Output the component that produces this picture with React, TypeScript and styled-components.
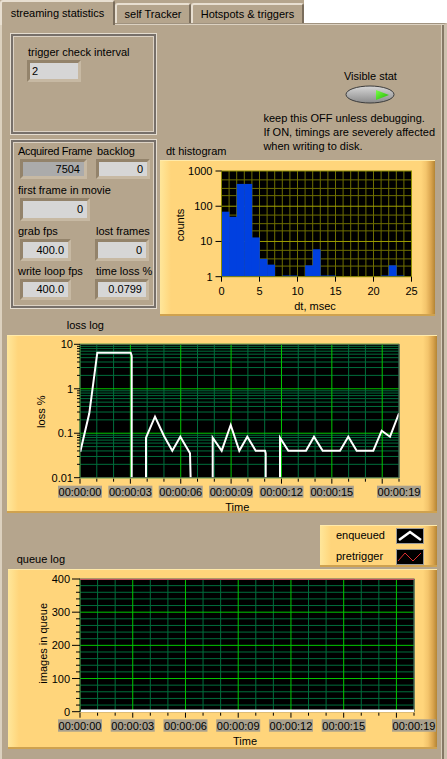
import React from 'react';
import styled, { createGlobalStyle } from 'styled-components';

const TAN = '#B5A58D';
const MAJOR = '#00C800';
const MINOR = '#006E3C';
const LABEL_BG = '#A9A08D';

const Global = createGlobalStyle`
  html, body { margin: 0; padding: 0; background: #fff; }
  body { font-family: "Liberation Sans", Arial, sans-serif; font-size: 11px; color: #000; }
  * { box-sizing: border-box; }
`;

const Screen = styled.div`
  width: 447px;
  height: 759px;
  overflow: hidden;
  display: flex;
  flex-direction: column;
  background: #fff;
`;

const TabStrip = styled.div`
  display: flex;
  align-items: flex-end;
  height: 23px;
  width: 304px;
  background: ${TAN};
  position: relative;
  z-index: 2;
  flex-shrink: 0;
`;

const Tab = styled.div<{ $active?: boolean; $w: number }>`
  width: ${p => p.$w}px;
  height: ${p => (p.$active ? 25 : 20)}px;
  margin-bottom: ${p => (p.$active ? -2 : 0)}px;
  padding-bottom: ${p => (p.$active ? 2 : 0)}px;
  background: ${TAN};
  border-left: 2px solid #E8DFD1;
  border-top: 2px solid #E8DFD1;
  border-right: 2px solid #7A6D5C;
  border-top-left-radius: 3px;
  border-top-right-radius: 3px;
  display: flex;
  align-items: center;
  justify-content: center;
  white-space: nowrap;
`;

const Panel = styled.div`
  flex: 1;
  background: ${TAN};
  border-top: 1px solid #A09380;
  border-left: 2px solid #DCD1BF;
  border-right: 3px solid #CDC1AE;
  box-shadow: inset 0 1px 0 #DCD2C2, inset -2px 0 0 #857865, inset -3px 0 0 #D8CDBB;
  display: flex;
  flex-direction: column;
  padding-top: 9px;
`;

const TopSection = styled.div`
  display: flex;
  gap: 3px;
  margin-left: 8px;
  height: 283px;
`;

const LeftCol = styled.div`
  width: 147px;
  display: flex;
  flex-direction: column;
  gap: 4px;
`;

const Cluster = styled.div<{ $h: number; $pt: number; $pl: number }>`
  height: ${p => p.$h}px;
  padding: ${p => p.$pt}px 0 0 ${p => p.$pl}px;
  border: 1px solid #E4DCCF;
  box-shadow: inset 0 0 0 2px #77706A, inset 0 0 0 3px #DCD2C4;
  display: flex;
  flex-direction: column;
  align-items: flex-start;
  gap: 1px;
`;

const FieldGrid = styled.div`
  display: grid;
  grid-template-columns: 78px 1fr;
  row-gap: 4px;
  align-items: start;
`;

const Field = styled.div<{ $span?: boolean; $mt?: number }>`
  display: flex;
  flex-direction: column;
  align-items: flex-start;
  gap: 1px;
  margin-top: ${p => p.$mt ?? 0}px;
  ${p => (p.$span ? 'grid-column: 1 / span 2;' : '')}
`;

const FieldLabel = styled.div<{ $tight?: boolean; $ml?: number }>`
  line-height: 13px;
  white-space: nowrap;
  margin-left: ${p => p.$ml ?? 0}px;
  letter-spacing: ${p => (p.$tight ? '-0.3px' : 'normal')};
`;

const NumBox = styled.div<{ $w: number; $h: number; $dark?: boolean; $left?: boolean; $ml?: number }>`
  width: ${p => p.$w}px;
  height: ${p => p.$h}px;
  margin-left: ${p => p.$ml ?? 0}px;
  border: 3px solid;
  border-color: #93836B #C7B9A3 #C7B9A3 #93836B;
  background: ${p => (p.$dark ? '#ABABAB' : '#D6D6D6')};
  display: flex;
  align-items: center;
  justify-content: ${p => (p.$left ? 'flex-start' : 'flex-end')};
  padding: 0 ${p => (p.$left ? 0 : 4)}px 0 ${p => (p.$left ? 2 : 0)}px;
  line-height: 13px;
`;

const RightCol = styled.div`
  width: 275px;
  display: flex;
  flex-direction: column;
`;

const HeadRow = styled.div`
  flex: 1;
  display: flex;
  align-items: flex-end;
`;

const Title = styled.div<{ $ml: number; $mb?: number; $mt?: number }>`
  margin-left: ${p => p.$ml}px;
  margin-bottom: ${p => p.$mb ?? 0}px;
  margin-top: ${p => p.$mt ?? 0}px;
  line-height: 13px;
  white-space: nowrap;
`;

const StatBlock = styled.div`
  margin-left: auto;
  margin-bottom: 7px;
  display: flex;
  flex-direction: column;
`;

const ToggleGroup = styled.div`
  margin-left: 81px;
  width: 52px;
  display: flex;
  flex-direction: column;
  align-items: center;
  gap: 2px;
  margin-bottom: 7px;
`;

const ToggleLabel = styled.div`
  line-height: 13px;
  white-space: nowrap;
`;

const ToggleButton = styled.div`
  width: 50px;
  height: 19px;
  svg { display: block; }
`;

const Notes = styled.div`
  line-height: 14px;
  white-space: nowrap;
`;

const Frame = styled.div<{ $w: number; $h: number; $ml?: number; $mt?: number }>`
  width: ${p => p.$w}px;
  height: ${p => p.$h}px;
  margin-left: ${p => p.$ml ?? 0}px;
  margin-top: ${p => p.$mt ?? 0}px;
  flex-shrink: 0;
  background: linear-gradient(
    to right,
    #FFE69A 0px,
    #FFDF8C 5px,
    #FFD57B 11px,
    #FFD57B calc(100% - 14px),
    #F4C56C calc(100% - 9px),
    #D9A44E calc(100% - 4px),
    #B48534 100%
  );
  box-shadow: inset 0 1px 0 #FFEAAA, inset 0 -2px 0 #CFA24F;
  svg { display: block; }
`;

const LegendRow = styled.div`
  display: flex;
  justify-content: space-between;
  align-items: flex-end;
  margin-top: 12px;
  margin-right: 7px;
`;

const LegendBox = styled(Frame)`
  display: flex;
  flex-direction: column;
  justify-content: center;
  gap: 5px;
  padding-left: 16px;
`;

const LegendItem = styled.div`
  display: flex;
  align-items: center;
  height: 16px;
`;

const LegendText = styled.div`
  width: 60px;
  line-height: 13px;
  white-space: nowrap;
`;

const Swatch = styled.div`
  width: 28px;
  height: 16px;
  background: #000;
  border: 1px solid #9A9A9A;
  svg { display: block; }
`;

/* ---------- charts ---------- */

const FONT = 11;

function TimeLabels({ xs, y, h }: { xs: { t: number; x: number }[]; y: number; h: number }) {
  return (
    <g>
      {xs.map(({ t, x }) => {
        const s = `00:00:${String(t).padStart(2, '0')}`;
        return (
          <g key={t}>
            <rect x={x - 22} y={y} width={44} height={h} fill={LABEL_BG} />
            <text x={x} y={y + h / 2 + 4} fontSize={FONT} textAnchor="middle">{s}</text>
          </g>
        );
      })}
    </g>
  );
}

function Histogram() {
  const W = 275, H = 156;
  const x0 = 61.5, x1 = 251.5, y0 = 11, y1 = 116.7;
  const X = (v: number) => x0 + ((x1 - x0) * v) / 25;
  const Y = (v: number) => y1 - ((y1 - y0) * Math.log10(v)) / 3;
  const counts = [70, 50, 430, 430, 13, 3.2, 2.2, 0, 1.08, 1.08, 0, 2.1, 6, 1.08, 1.08, 0, 0, 0, 0, 0, 0, 1.08, 2.1, 1.08, 0];
  const minorVals: number[] = [];
  [1, 10, 100].forEach(d => [2, 3.2, 5.6].forEach(m => minorVals.push(m * d)));
  const OLIVE = '#6E6E00';
  const OLIVE_B = '#A0A000';
  return (
    <svg width={W} height={H}>
      <rect x={x0} y={y0} width={x1 - x0} height={y1 - y0} fill="#000" />
      {Array.from({ length: 26 }, (_, i) => (
        <line key={'v' + i} x1={X(i)} x2={X(i)} y1={y0} y2={y1} stroke={OLIVE} strokeWidth={1} />
      ))}
      {minorVals.map(v => (
        <line key={'m' + v} x1={x0} x2={x1} y1={Y(v)} y2={Y(v)} stroke={OLIVE} strokeWidth={1} />
      ))}
      {[10, 100].map(v => (
        <line key={'M' + v} x1={x0} x2={x1} y1={Y(v)} y2={Y(v)} stroke={OLIVE_B} strokeWidth={1} />
      ))}
      {counts.map((c, i) =>
        c > 0 ? (
          <rect key={'b' + i} x={X(i)} y={Y(c)} width={X(i + 1) - X(i) + 0.3} height={y1 - Y(c)} fill="#0040E0" />
        ) : null
      )}
      <rect x={x0} y={y0} width={x1 - x0} height={y1 - y0} fill="none" stroke="#8A8A00" strokeWidth={1} />
      {[1, 10, 100, 1000].map(v => (
        <g key={'yt' + v}>
          <line x1={x0 - 6} x2={x0} y1={Y(v)} y2={Y(v)} stroke="#000" />
          <text x={x0 - 9} y={Y(v) + 4} fontSize={FONT} textAnchor="end">{v}</text>
        </g>
      ))}
      {[0, 5, 10, 15, 20, 25].map(v => (
        <g key={'xt' + v}>
          <line x1={X(v)} x2={X(v)} y1={y1} y2={y1 + 5} stroke="#000" />
          <text x={X(v)} y={131 + 4} fontSize={FONT} textAnchor="middle">{v}</text>
        </g>
      ))}
      <text transform={`rotate(-90 20 65)`} x={20} y={69} fontSize={FONT} textAnchor="middle">counts</text>
      <text x={155} y={150} fontSize={FONT} textAnchor="middle">dt, msec</text>
    </svg>
  );
}

const lossPts3x: [number, number][] = [
  [241, 425], [268, 310], [292, 128], [392, 128], [395, 138], [395, 512],
  [438, 512], [438, 383], [465, 320], [492, 378], [517, 422], [541, 380], [570, 430], [572, 512],
  [638, 512], [638, 383], [665, 422], [692, 345], [718, 422], [742, 380], [767, 422], [795, 422], [797, 430], [797, 512],
  [840, 512], [840, 383], [865, 422], [918, 422], [942, 380], [968, 422], [1020, 422], [1045, 380], [1070, 422],
  [1120, 422], [1145, 362], [1170, 380], [1197, 310],
];

function LossLog() {
  const W = 430, H = 178;
  const x0 = 73, x1 = 392, y0 = 9.3, y1 = 142.7;
  const T = (t: number) => x0 + ((x1 - x0) * t) / 19;
  const L = (v: number) => y1 - ((y1 - y0) * (Math.log10(v) + 2)) / 3;
  const minors: number[] = [];
  [0.01, 0.1, 1].forEach(d => [2, 3, 4, 5, 6, 7, 8, 9].forEach(m => minors.push(m * d)));
  const pts = lossPts3x.map(([x, y]) => `${(x / 3 - 7).toFixed(1)},${(y / 3 - 25).toFixed(1)}`).join(' ');
  return (
    <svg width={W} height={H}>
      <defs>
        <clipPath id="lossclip">
          <rect x={x0} y={y0} width={x1 - x0} height={y1 - y0} />
        </clipPath>
      </defs>
      <rect x={x0} y={y0} width={x1 - x0} height={y1 - y0} fill="#000" />
      {minors.map(v => (
        <line key={'hm' + v} x1={x0} x2={x1} y1={L(v)} y2={L(v)} stroke={MINOR} />
      ))}
      {Array.from({ length: 20 }, (_, t) => (
        <line key={'vm' + t} x1={T(t)} x2={T(t)} y1={y0} y2={y1} stroke={t % 3 === 0 ? MAJOR : MINOR} />
      ))}
      {[0.01, 0.1, 1, 10].map(v => (
        <line key={'hM' + v} x1={x0} x2={x1} y1={L(v)} y2={L(v)} stroke={MAJOR} />
      ))}
      <polyline points={pts} fill="none" stroke="#fff" strokeWidth={2} clipPath="url(#lossclip)" strokeLinejoin="miter" />
      <rect x={x0} y={y0} width={x1 - x0} height={y1 - y0} fill="none" stroke="#5A5A5A" />
      {minors.map(v => (
        <line key={'tm' + v} x1={x0 - 3} x2={x0} y1={L(v)} y2={L(v)} stroke="#000" />
      ))}
      {[0.01, 0.1, 1, 10].map(v => (
        <g key={'ty' + v}>
          <line x1={x0 - 6} x2={x0} y1={L(v)} y2={L(v)} stroke="#000" />
          <text x={x0 - 7} y={L(v) + 4} fontSize={FONT} textAnchor="end">{String(v)}</text>
        </g>
      ))}
      {Array.from({ length: 20 }, (_, t) => (
        <line key={'tx' + t} x1={T(t)} x2={T(t)} y1={y1 + 1} y2={y1 + (t % 3 === 0 ? 6 : 4)} stroke="#000" />
      ))}
      <TimeLabels xs={[0, 3, 6, 9, 12, 15, 19].map(t => ({ t, x: T(t) }))} y={150.7} h={12} />
      <text transform={`rotate(-90 33.7 76.7)`} x={33.7} y={80.7} fontSize={FONT} textAnchor="middle">loss %</text>
      <text x={230.3} y={175.7} fontSize={FONT} textAnchor="middle">Time</text>
    </svg>
  );
}

function QueueLog() {
  const W = 429, H = 180;
  const x0 = 72, x1 = 406, y0 = 10, y1 = 142.7;
  const T = (t: number) => x0 + ((x1 - x0) * t) / 19;
  const Q = (v: number) => y1 - ((y1 - y0) * v) / 400;
  const hs = Array.from({ length: 21 }, (_, i) => i * 20);
  return (
    <svg width={W} height={H}>
      <rect x={x0} y={y0} width={x1 - x0} height={y1 - y0} fill="#000" />
      {hs.filter(v => v % 100 !== 0).map(v => (
        <line key={'hm' + v} x1={x0} x2={x1} y1={Q(v)} y2={Q(v)} stroke={MINOR} />
      ))}
      {Array.from({ length: 20 }, (_, t) => (
        <line key={'vm' + t} x1={T(t)} x2={T(t)} y1={y0} y2={y1} stroke={t % 3 === 0 ? MAJOR : MINOR} />
      ))}
      {[100, 200, 300].map(v => (
        <line key={'hM' + v} x1={x0} x2={x1} y1={Q(v)} y2={Q(v)} stroke={MAJOR} />
      ))}
      <rect x={x0} y={y0} width={x1 - x0} height={y1 - y0} fill="none" stroke="#5A5A5A" />
      <line x1={x0} x2={x1} y1={y0 + 0.5} y2={y0 + 0.5} stroke="#C0505C" strokeWidth={1} />
      <line x1={x0 + 1} x2={x1} y1={y1 - 1} y2={y1 - 1} stroke="#fff" strokeWidth={2.5} />
      {hs.map(v => (
        <line key={'ty' + v} x1={x0 - (v % 100 === 0 ? 8 : 4)} x2={x0} y1={Q(v)} y2={Q(v)} stroke="#000" />
      ))}
      {[0, 100, 200, 300, 400].map(v => (
        <text key={'yl' + v} x={x0 - 10} y={Q(v) + 4} fontSize={FONT} textAnchor="end">{v}</text>
      ))}
      {Array.from({ length: 20 }, (_, t) => (
        <line key={'tx' + t} x1={T(t)} x2={T(t)} y1={y1 + 1} y2={y1 + (t % 3 === 0 ? 6 : 4)} stroke="#000" />
      ))}
      <TimeLabels xs={[0, 3, 6, 9, 12, 15, 19].map(t => ({ t, x: T(t) }))} y={150.3} h={12.4} />
      <text transform={`rotate(-90 35.3 74.3)`} x={35.3} y={78.3} fontSize={FONT} textAnchor="middle">images in queue</text>
      <text x={237} y={175.7} fontSize={FONT} textAnchor="middle">Time</text>
    </svg>
  );
}

function ToggleGraphic() {
  return (
    <svg width={50} height={19} viewBox="0 0 50 19">
      <defs>
        <linearGradient id="tgl" x1="0" y1="0" x2="0" y2="1">
          <stop offset="0" stopColor="#D8D8D8" />
          <stop offset="0.45" stopColor="#B4B4B4" />
          <stop offset="1" stopColor="#8A8A8A" />
        </linearGradient>
        <linearGradient id="led" x1="0" y1="0" x2="1" y2="1">
          <stop offset="0" stopColor="#7CFF4A" />
          <stop offset="1" stopColor="#1EB400" />
        </linearGradient>
      </defs>
      <ellipse cx={25} cy={9.5} rx={24} ry={8.5} fill="url(#tgl)" stroke="#3C3C3C" strokeWidth={1} />
      <polygon points="31,5 44,10 31,15" fill="url(#led)" />
    </svg>
  );
}

function WhiteSwatch() {
  return (
    <svg width={26} height={14}>
      <polyline points="2,11 13,3 24,11" fill="none" stroke="#fff" strokeWidth={2.5} />
    </svg>
  );
}

function RedSwatch() {
  return (
    <svg width={26} height={14}>
      <polyline points="1,11 8,3 16,11 24,3" fill="none" stroke="#E03030" strokeWidth={1} />
    </svg>
  );
}

export default function App() {
  return (
    <Screen>
      <Global />
      <TabStrip>
        <Tab $active $w={115}>streaming statistics</Tab>
        <Tab $w={76}>self Tracker</Tab>
        <Tab $w={113}>Hotspots &amp; triggers</Tab>
      </TabStrip>
      <Panel>
        <TopSection>
          <LeftCol>
            <Cluster $h={102} $pt={12} $pl={16}>
              <FieldLabel $ml={1}>trigger check interval</FieldLabel>
              <NumBox $w={54} $h={22} $left>2</NumBox>
            </Cluster>
            <Cluster $h={170} $pt={5} $pl={7}>
              <FieldGrid>
                <Field>
                  <FieldLabel $tight>Acquired Frame</FieldLabel>
                  <NumBox $w={67} $h={20} $dark $ml={2}>7504</NumBox>
                </Field>
                <Field>
                  <FieldLabel $ml={1}>backlog</FieldLabel>
                  <NumBox $w={54} $h={20}>0</NumBox>
                </Field>
                <Field $span $mt={1}>
                  <FieldLabel>first frame in movie</FieldLabel>
                  <NumBox $w={70} $h={23} $ml={2}>0</NumBox>
                </Field>
                <Field>
                  <FieldLabel>grab fps</FieldLabel>
                  <NumBox $w={51} $h={22} $ml={2}>400.0</NumBox>
                </Field>
                <Field>
                  <FieldLabel>lost frames</FieldLabel>
                  <NumBox $w={54} $h={22} $ml={-1}>0</NumBox>
                </Field>
                <Field>
                  <FieldLabel>write loop fps</FieldLabel>
                  <NumBox $w={51} $h={21} $ml={2}>400.0</NumBox>
                </Field>
                <Field>
                  <FieldLabel>time loss %</FieldLabel>
                  <NumBox $w={54} $h={21} $ml={-1}>0.0799</NumBox>
                </Field>
              </FieldGrid>
            </Cluster>
          </LeftCol>
          <RightCol>
            <HeadRow>
              <Title $ml={6} $mb={2}>dt histogram</Title>
              <StatBlock>
                <ToggleGroup>
                  <ToggleLabel>Visible stat</ToggleLabel>
                  <ToggleButton>
                    <ToggleGraphic />
                  </ToggleButton>
                </ToggleGroup>
                <Notes>
                  keep this OFF unless debugging.
                  <br />
                  If ON, timings are severely affected
                  <br />
                  when writing to disk.
                </Notes>
              </StatBlock>
            </HeadRow>
            <Frame $w={275} $h={156}>
              <Histogram />
            </Frame>
          </RightCol>
        </TopSection>
        <Title $ml={64.7} $mt={3}>loss log</Title>
        <Frame $w={430} $h={178} $ml={5} $mt={3}>
          <LossLog />
        </Frame>
        <LegendRow>
          <Title $ml={14.7} $mb={1}>queue log</Title>
          <LegendBox $w={117} $h={42}>
            <LegendItem>
              <LegendText>enqueued</LegendText>
              <Swatch>
                <WhiteSwatch />
              </Swatch>
            </LegendItem>
            <LegendItem>
              <LegendText>pretrigger</LegendText>
              <Swatch>
                <RedSwatch />
              </Swatch>
            </LegendItem>
          </LegendBox>
        </LegendRow>
        <Frame $w={429} $h={180} $ml={6} $mt={2}>
          <QueueLog />
        </Frame>
      </Panel>
    </Screen>
  );
}
